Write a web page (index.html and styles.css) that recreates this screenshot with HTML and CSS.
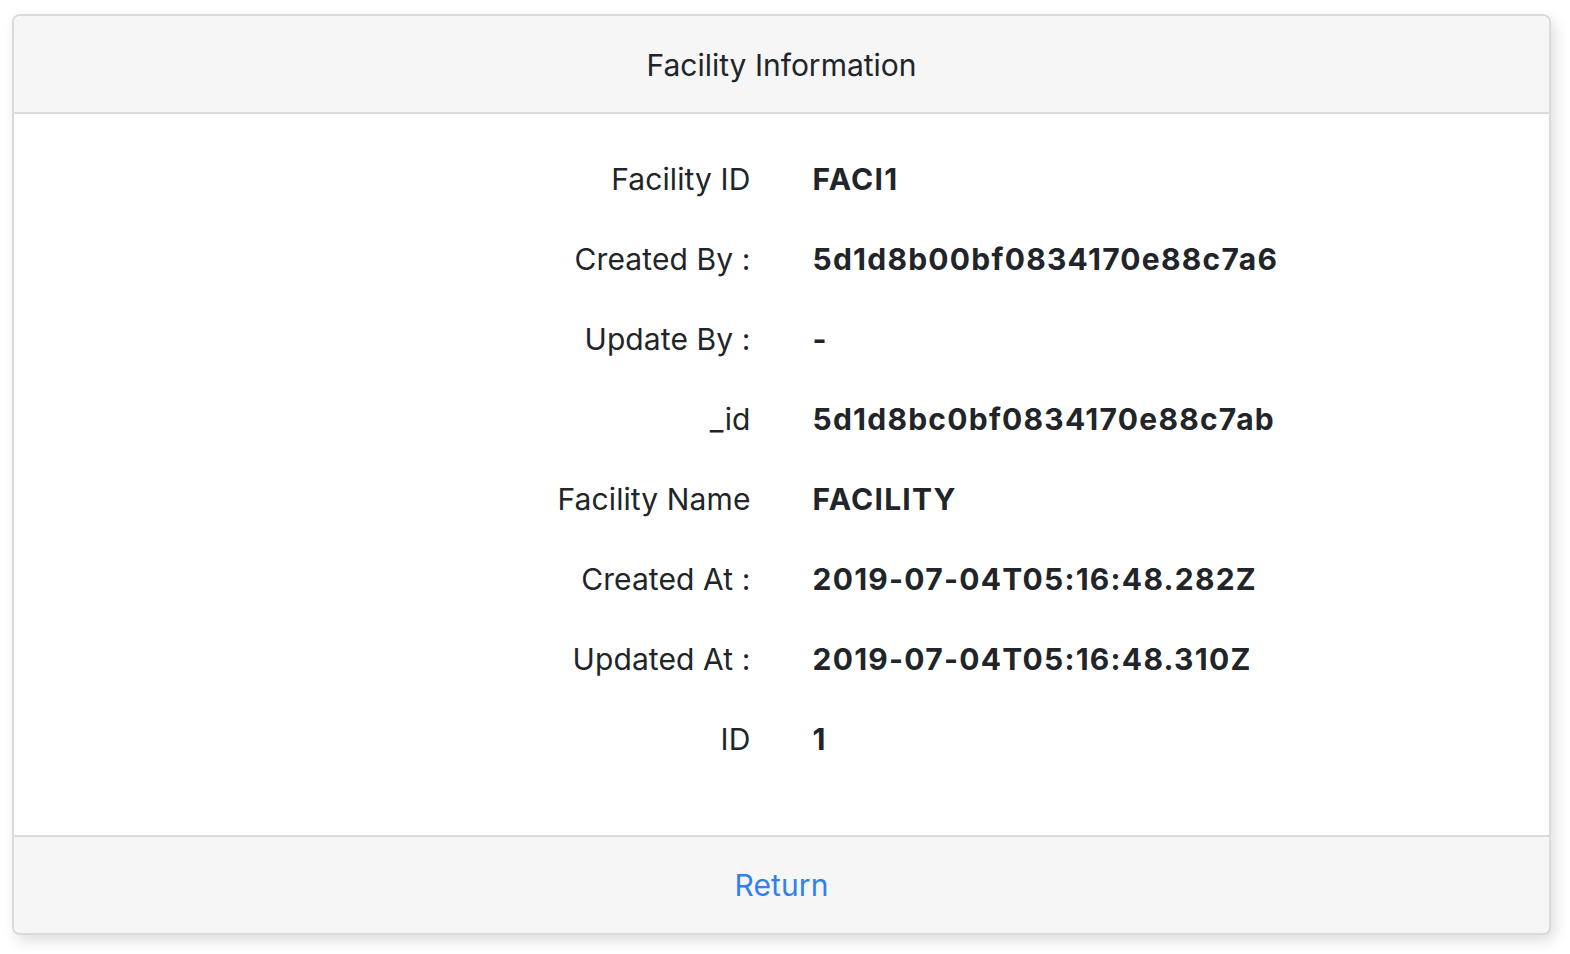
FILE: index.html
```html
<!DOCTYPE html>
<html lang="en">
<head>
<meta charset="utf-8">
<title>Facility Information</title>
<link rel="stylesheet" href="styles.css">
</head>
<body>
<div class="page">
  <div class="card">
    <div class="card-header">Facility Information</div>
    <div class="card-body">
      <div class="row"><div class="label">Facility ID</div><div class="value">FACI1</div></div>
      <div class="row"><div class="label">Created By :</div><div class="value">5d1d8b00bf0834170e88c7a6</div></div>
      <div class="row"><div class="label">Update By :</div><div class="value">-</div></div>
      <div class="row"><div class="label">_id</div><div class="value">5d1d8bc0bf0834170e88c7ab</div></div>
      <div class="row"><div class="label">Facility Name</div><div class="value">FACILITY</div></div>
      <div class="row"><div class="label">Created At :</div><div class="value">2019-07-04T05:16:48.282Z</div></div>
      <div class="row"><div class="label">Updated At :</div><div class="value">2019-07-04T05:16:48.310Z</div></div>
      <div class="row"><div class="label">ID</div><div class="value">1</div></div>
    </div>
    <div class="card-footer"><a class="return-link" href="#">Return</a></div>
  </div>
</div>
</body>
</html>
```
FILE: styles.css
```css
html, body {
  margin: 0;
  padding: 0;
  background: #ffffff;
}
body {
  font-family: Inter, "Liberation Sans", Arial, sans-serif;
  color: #212529;
}
.page {
  padding: 14px 19px 20px 12px;
}
.card {
  border: 2px solid #dadada;
  border-radius: 8px;
  background: #ffffff;
  box-shadow: 4px 6px 14px rgba(0, 0, 0, 0.13);
  overflow: hidden;
}
.card-header {
  height: 94px;
  padding-top: 2px;
  display: flex;
  align-items: center;
  justify-content: center;
  background: #f6f6f6;
  border-bottom: 2px solid #dadada;
  font-size: 30px;
}
.card-body {
  padding: 25px 0 56px;
}
.row {
  display: grid;
  grid-template-columns: 1fr 1fr;
  column-gap: 62px;
  height: 80px;
  align-items: center;
}
.label {
  text-align: right;
  font-size: 30px;
  letter-spacing: 0.1px;
}
.value {
  font-size: 30px;
  font-weight: 700;
  letter-spacing: 1.25px;
}
.card-footer {
  height: 96px;
  display: flex;
  align-items: center;
  justify-content: center;
  background: #f6f6f6;
  border-top: 2px solid #dadada;
}
.return-link {
  color: #3080f0;
  text-decoration: none;
  font-size: 30px;
  letter-spacing: 0.1px;
}
```
